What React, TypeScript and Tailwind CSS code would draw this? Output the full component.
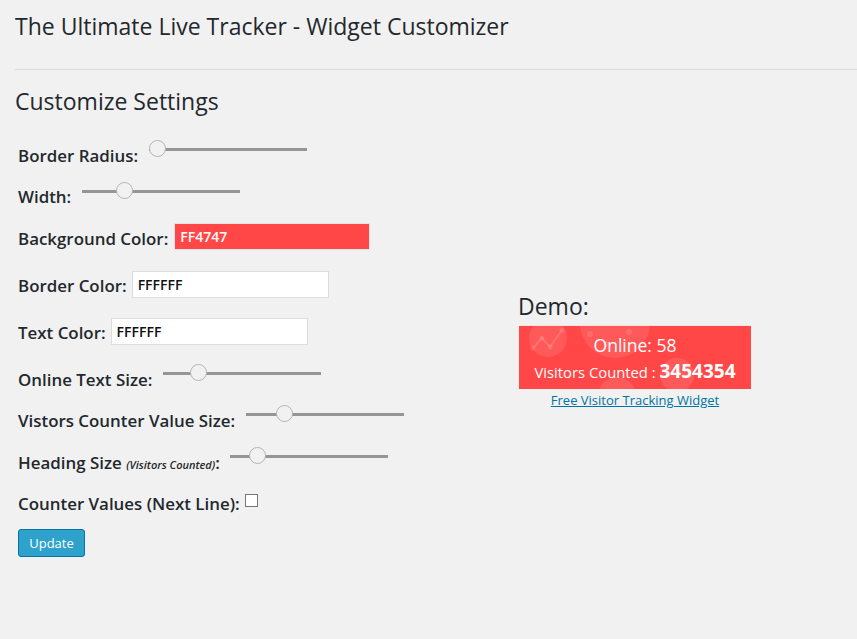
function Slider({ pos, className }: { pos: number; className: string }) {
  return (
    <span className={`relative block w-[158px] h-[3px] bg-[#959595] ${className}`}>
      <span
        className="absolute top-[-8px] w-[17px] h-[17px] rounded-full bg-[#f1f1f1] border-[1.5px] border-[#b4b4b4] box-border"
        style={{ left: pos }}
      />
    </span>
  );
}

function Row({ className, children }: { className: string; children: React.ReactNode }) {
  return <div className={`flex items-start text-[16.9px] leading-[22px] font-semibold text-[#23282d] ${className}`}>{children}</div>;
}

function ColorField({ value, width, red }: { value: string; width: string; red?: boolean }) {
  return (
    <span
      className={`block ${width} h-[27px] pl-[5px] text-[14px] leading-[25px] font-semibold border ${
        red ? "ml-[6px] bg-[#ff4747] border-[#e4e4e4] text-white" : "ml-[5px] bg-white border-[#dddddd] text-[#111111]"
      }`}
    >
      {value}
    </span>
  );
}

export default function App() {
  return (
    <div className="w-[857px] h-[639px] overflow-hidden bg-[#f1f1f1] font-['Open_Sans',sans-serif] text-[#23282d]">
      <div className="pl-[15px]">
        <h1 className="pt-[11px] h-[70px] text-[23px] leading-[31px] font-normal border-b border-[#dddddd]">
          The Ultimate Live Tracker - Widget Customizer
        </h1>
      </div>
      <div className="flex">
        <div className="w-[518px] shrink-0 pl-[18px]">
          <h2 className="ml-[-3px] pt-[16px] text-[23px] leading-[31px] font-normal">Customize Settings</h2>
          <Row className="mt-[19px] h-[27px]">
            <span className="pt-[9px]">Border Radius:</span>
            <Slider pos={0} className="ml-[11px] mt-[12px]" />
          </Row>
          <Row className="mt-[14px] h-[28px]">
            <span className="pt-[9px]">Width:</span>
            <Slider pos={34} className="ml-[11px] mt-[13px]" />
          </Row>
          <Row className="mt-[18px] h-[28px]">
            <span className="pt-[5px]">Background Color:</span>
            <ColorField value="FF4747" width="w-[196px]" red />
          </Row>
          <Row className="mt-[20px] h-[28px]">
            <span className="pt-[4px]">Border Color:</span>
            <ColorField value="FFFFFF" width="w-[197px]" />
          </Row>
          <Row className="mt-[19px] h-[28px]">
            <span className="pt-[4px]">Text Color:</span>
            <ColorField value="FFFFFF" width="w-[197px]" />
          </Row>
          <Row className="mt-[14px] h-[28px]">
            <span className="pt-[9px]">Online Text Size:</span>
            <Slider pos={27} className="ml-[11px] mt-[12px]" />
          </Row>
          <Row className="mt-[13px] h-[28px]">
            <span className="pt-[9px]">Vistors Counter Value Size:</span>
            <Slider pos={30} className="ml-[11px] mt-[12px]" />
          </Row>
          <Row className="mt-[14px] h-[28px]">
            <span className="pt-[9px]">
              Heading Size <i className="text-[11px] font-semibold">(Visitors Counted)</i>:
            </span>
            <Slider pos={19} className="ml-[10px] mt-[12px]" />
          </Row>
          <Row className="mt-[13px] h-[28px]">
            <span className="pt-[9px]">Counter Values (Next Line):</span>
            <span className="block ml-[5px] mt-[10px] w-[13px] h-[13px] bg-white border border-[#767676]" />
          </Row>
          <button className="block mt-[17px] w-[67px] h-[28px] rounded-[3px] bg-[#2ea2cc] border border-[#0074a2] text-white text-[13px] leading-[25px] font-normal text-center">
            Update
          </button>
        </div>
        <div className="w-[234px] pt-[221px]">
          <div className="text-[23px] leading-[30px] text-[#23282d]">Demo:</div>
          <div className="relative mt-[4px] w-[232px] h-[64px] ml-[1px] overflow-hidden bg-[#ff4747] border-t border-[#ffe0e0] text-white text-center">
            <svg className="absolute inset-0" width="232" height="64" viewBox="0 0 232 64">
              <g fill="#ffffff" fillOpacity="0.1">
                <circle cx="29" cy="12" r="19" />
                <circle cx="96" cy="-3" r="35" />
                <circle cx="158" cy="49" r="17" />
                <circle cx="98" cy="70" r="19" />
              </g>
              <path d="M14 22 L23 12 L31 21 L43 4" fill="none" stroke="#ffffff" strokeOpacity="0.14" strokeWidth="2" />
              <g fill="#ffffff" fillOpacity="0.12">
                <circle cx="14" cy="22" r="2.5" />
                <circle cx="23" cy="12" r="2.5" />
                <circle cx="31" cy="21" r="2.5" />
                <circle cx="43" cy="4" r="2.5" />
                <circle cx="71" cy="8" r="3" />
                <circle cx="88" cy="18" r="3" />
                <circle cx="110" cy="6" r="3" />
              </g>
            </svg>
            <div className="relative pt-[6px] text-[17.5px] leading-[26px]">Online: 58</div>
            <div className="relative mt-[0px] text-[14.8px] leading-[26px]">
              Visitors Counted : <b className="text-[19px] font-bold">3454354</b>
            </div>
          </div>
          <a className="block mt-[2px] w-[234px] text-center text-[13px] leading-[18px] text-[#0074a2] underline">
            Free Visitor Tracking Widget
          </a>
        </div>
      </div>
    </div>
  );
}
